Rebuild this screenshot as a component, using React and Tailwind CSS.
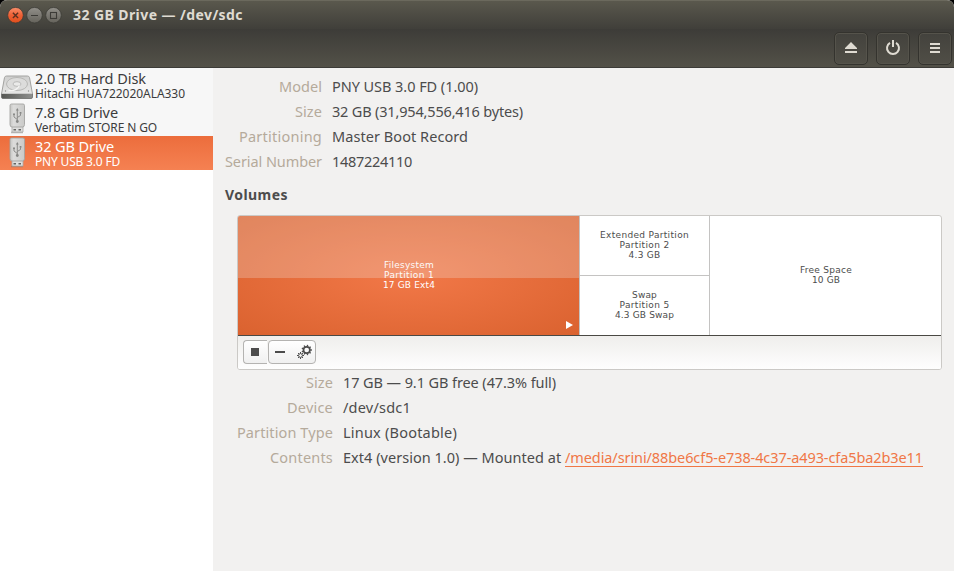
import { useLayoutEffect, useRef, useState } from "react";

// Spreads the letters so that a label takes exactly `w` pixels.
function Fit({ w, children, className = "" }) {
  const ref = useRef(null);
  const [spacing, setSpacing] = useState(0);
  useLayoutEffect(() => {
    const natural = ref.current.getBoundingClientRect().width;
    setSpacing((w - natural) / children.length);
  }, []);
  return (
    <span ref={ref} className={`inline-block whitespace-pre ${className}`} style={{ letterSpacing: `${spacing}px` }}>
      {children}
    </span>
  );
}

function WindowButton({ kind }) {
  const close = kind === "close";
  return (
    <svg width="17" height="17" viewBox="0 0 17 17">
      <defs>
        <linearGradient id={`wb-${kind}`} x1="0" y1="0" x2="0" y2="1">
          <stop offset="0" stopColor={close ? "#f8906c" : "#92908a"} />
          <stop offset="0.5" stopColor={close ? "#ee6035" : "#7b7973"} />
          <stop offset="1" stopColor={close ? "#e04f1c" : "#65635b"} />
        </linearGradient>
      </defs>
      <circle cx="8.500" cy="8.200" r="7.800" fill={`url(#wb-${kind})`} stroke="#3a3934" strokeWidth="0.700" />
      {close && <path d="M5.900 5.700l5.200 5.200M11.100 5.700l-5.200 5.200" stroke="#5a3020" strokeWidth="1.400" />}
      {kind === "min" && <path d="M5 8.500h7" stroke="#3c3b37" strokeWidth="1.200" />}
      {kind === "max" && <rect x="5.500" y="5.500" width="6" height="6" fill="none" stroke="#3c3b37" strokeWidth="1.100" />}
    </svg>
  );
}

function HeaderButton({ children }) {
  return (
    <div className="flex h-[33px] w-[34px] items-center justify-center rounded-[5px] border border-[#34332e] bg-linear-to-b from-[#43423d] to-[#504e46] shadow-[inset_0_0_0_1px_#55534b]">
      {children}
    </div>
  );
}

function DiskIcon() {
  return (
    <svg width="34" height="34" viewBox="0 0 34 34">
      <defs>
        <linearGradient id="disk-top" x1="0" y1="0" x2="0" y2="1">
          <stop offset="0" stopColor="#cfcfce" />
          <stop offset="1" stopColor="#e6e6e5" />
        </linearGradient>
        <linearGradient id="disk-front" x1="0" y1="0" x2="1" y2="0">
          <stop offset="0" stopColor="#555653" />
          <stop offset="1" stopColor="#8f908e" />
        </linearGradient>
      </defs>
      <path d="M6.500 8h21q1.500 0 2 1.500l3 16.500h-31l3-16.500q0.500-1.500 2-1.500z" fill="url(#disk-top)" stroke="#a2a2a0" />
      <path d="M1.500 25.500h31v3.500q0 1.500-1.500 1.500h-28q-1.500 0-1.500-1.500z" fill="url(#disk-front)" stroke="#6b6c6a" strokeWidth="0.800" />
      <path d="M1.500 25.500h31" stroke="#c9c9c8" />
      <ellipse cx="17" cy="16" rx="10.500" ry="6.500" fill="#dcdcdb" stroke="#b2b2b0" strokeWidth="0.900" />
      <ellipse cx="17" cy="16" rx="4" ry="2.300" fill="#ebebea" stroke="#b0b0ae" strokeWidth="0.800" />
      <path d="M8.500 22.500q8 1 11-5" fill="none" stroke="#f4f4f3" strokeWidth="1.300" />
      <circle cx="5.500" cy="23" r="0.700" fill="#8d8d8b" />
      <circle cx="28.500" cy="23" r="0.700" fill="#8d8d8b" />
    </svg>
  );
}

function UsbIcon({ id }) {
  return (
    <svg width="34" height="34" viewBox="0 0 34 34">
      <defs>
        <linearGradient id={id} x1="0" y1="0" x2="1" y2="0">
          <stop offset="0" stopColor="#c6c6c4" />
          <stop offset="0.250" stopColor="#dcdcdb" />
          <stop offset="1" stopColor="#cacac8" />
        </linearGradient>
      </defs>
      <path d="M11 30.500h12" stroke="#777876" strokeOpacity="0.500" strokeWidth="1.500" />
      <path d="M12 24.500h11v5.500h-11z" fill="#dededd" stroke="#a9a9a7" strokeWidth="0.800" />
      <path d="M13.500 27h2.500v1.500h-2.500zM18.500 27h2.500v1.500h-2.500z" fill="#636462" />
      <path d="M10 3.500q0-1.500 1.500-1.500h11.500q1.500 0 1.500 1.500v19q0 2.500-2 2.500h-10.500q-2 0-2-2.500z" fill={`url(#${id})`} stroke="#a4a4a2" strokeWidth="0.900" />
      <path d="M17.300 8v11M17.300 17.500l-3.300-2.500v-2.500M17.300 15.500l3.200-2v-2" fill="none" stroke="#848583" strokeWidth="0.900" />
      <path d="M17.300 6l-1.400 2.600h2.800z" fill="#848583" />
      <circle cx="17.300" cy="19.500" r="1.400" fill="#848583" />
      <circle cx="14" cy="12.300" r="1" fill="#848583" />
      <path d="M19.700 10h1.700v1.700h-1.700z" fill="#848583" />
    </svg>
  );
}

function DriveRow({ icon, title, titleW, sub, subW, selected }) {
  return (
    <div
      className={`flex h-[34px] ${
        selected ? "bg-linear-to-b from-[#ec6d3c] to-[#f58152] text-white" : "bg-[#f7f7f7] text-[#3c3c3c]"
      }`}
    >
      {icon}
      <div className="flex flex-col gap-px pt-[2px] pl-px">
        <Fit w={titleW} className="self-start text-[14.5px] leading-[16px]">{title}</Fit>
        <Fit w={subW} className="self-start text-[12px] leading-[13px]">{sub}</Fit>
      </div>
    </div>
  );
}

function Detail({ label, labelW, value, valueW, labelCol, children }) {
  return (
    <div className="flex h-[25px] items-center gap-[10px] text-[14.5px] leading-[25px]">
      <div className={`flex justify-end text-[#b5aa9b] ${labelCol}`}>
        <Fit w={labelW}>{label}</Fit>
      </div>
      <div className="flex">
        <Fit w={valueW}>{value}</Fit>
        {children}
      </div>
    </div>
  );
}

function VolumeText({ lines, className = "" }) {
  return (
    <div className={`flex flex-col items-center pb-[2px] font-['DejaVu_Sans'] text-[9px] leading-[10px] ${className}`}>
      {lines.map(([text, w]) => (
        <Fit key={text} w={w}>{text}</Fit>
      ))}
    </div>
  );
}

const gear = (cx, cy, r, teeth) =>
  Array.from({ length: teeth }, (_, i) => {
    const a = (i * 2 * Math.PI) / teeth;
    return `M${cx + r * Math.cos(a)} ${cy + r * Math.sin(a)}L${cx + (r + 1.6) * Math.cos(a)} ${cy + (r + 1.6) * Math.sin(a)}`;
  }).join("");

export default function App() {
  return (
    <div className="h-[571px] w-[954px] overflow-hidden bg-black font-['Noto_Sans',sans-serif] text-[#4c4c4c]">
      <div className="flex h-full flex-col overflow-hidden rounded-t-[7px] bg-[#f2f1f0]">
        <header className="flex h-[29px] shrink-0 items-center gap-[2px] border-t border-[#6b695d] bg-linear-to-b from-[#5a584d] to-[#403f3a] pl-[7px]">
          <WindowButton kind="close" />
          <WindowButton kind="min" />
          <WindowButton kind="max" />
          <div className="pb-px pl-[9px] text-[14px] leading-[20px] font-bold text-[#dfdbd2]">
            <Fit w={170}>32 GB Drive — /dev/sdc</Fit>
          </div>
        </header>

        <div className="flex h-[39px] shrink-0 justify-end gap-[8px] border-b border-[#3c3b37] bg-linear-to-b from-[#3d3c38] to-[#535148] pt-[3px] pr-[2px]">
          <HeaderButton>
            <svg width="14" height="15" viewBox="0 0 14 15" fill="#dfdbd2">
              <path d="M7 1L13 7v1H1V7zM1 10h12v2H1z" />
            </svg>
          </HeaderButton>
          <HeaderButton>
            <svg width="16" height="17" viewBox="0 0 16 17" fill="none" stroke="#dfdbd2" strokeWidth="2">
              <path d="M5 2.900a6 6 0 1 0 6 0M8 0v7" />
            </svg>
          </HeaderButton>
          <HeaderButton>
            <svg width="10" height="11" viewBox="0 0 10 11" fill="#dfdbd2">
              <path d="M0 0h10v2H0zM0 4h10v2H0zM0 8h10v2H0z" />
            </svg>
          </HeaderButton>
        </div>

        <div className="flex min-h-0 flex-1">
          <aside className="w-[213px] shrink-0 bg-white">
            <DriveRow icon={<DiskIcon />} title="2.0 TB Hard Disk" titleW={111} sub="Hitachi HUA722020ALA330" subW={150} />
            <DriveRow icon={<UsbIcon id="usb-a" />} title="7.8 GB Drive" titleW={83} sub="Verbatim STORE N GO" subW={122} />
            <DriveRow icon={<UsbIcon id="usb-b" />} title="32 GB Drive" titleW={79} sub="PNY USB 3.0 FD" subW={85} selected />
          </aside>

          <main className="flex flex-1 flex-col pt-[6px] pr-[12px] pl-[12px]">
            <Detail labelCol="w-[97px]" label="Model" labelW={43} value="PNY USB 3.0 FD (1.00)" valueW={146} />
            <Detail labelCol="w-[97px]" label="Size" labelW={27} value="32 GB (31,954,556,416 bytes)" valueW={191} />
            <Detail labelCol="w-[97px]" label="Partitioning" labelW={83} value="Master Boot Record" valueW={136} />
            <Detail labelCol="w-[97px]" label="Serial Number" labelW={97} value="1487224110" valueW={80} />
            <div className="mt-[8px] h-[25px] text-[14px] leading-[25px] font-bold">
              <Fit w={63}>Volumes</Fit>
            </div>

            <section className="mt-[8px] ml-[12px] h-[155px] overflow-hidden rounded-[3px] border border-[#cbc9c6] bg-white">
              <div className="flex h-[120px] border-b border-[#4a4944]">
                <div className="relative flex w-[341px] items-center justify-center bg-[radial-gradient(ellipse_at_center,#f27848_0%,#da622f_100%)] text-white">
                  <VolumeText className="pl-px" lines={[["Filesystem", 50], ["Partition 1", 50], ["17 GB Ext4", 52]]} />
                  <div className="absolute inset-x-0 top-0 h-[62px] bg-[#f4f0ec]/25" />
                  <svg className="absolute right-[6px] bottom-[6px]" width="7" height="8" viewBox="0 0 7 8" fill="#fff">
                    <path d="M0 0L7 4L0 8z" />
                  </svg>
                </div>
                <div className="flex w-[131px] flex-col border-x border-[#c4c3c2]">
                  <div className="flex h-[60px] items-center justify-center border-b border-[#c4c3c2]">
                    <VolumeText lines={[["Extended Partition", 89], ["Partition 2", 50], ["4.3 GB", 32]]} />
                  </div>
                  <div className="flex flex-1 items-center justify-center">
                    <VolumeText lines={[["Swap", 25], ["Partition 5", 50], ["4.3 GB Swap", 59]]} />
                  </div>
                </div>
                <div className="flex flex-1 items-center justify-center">
                  <VolumeText className="pl-px" lines={[["Free Space", 52], ["10 GB", 28]]} />
                </div>
              </div>
              <div className="flex h-[33px] bg-linear-to-b from-[#efeeec] to-[#fefefe] pt-[4px] pl-[5px]">
                <div className="flex h-[24px] w-[24px] items-center rounded-l-[4px] border border-r-0 border-[#b4b3b1] bg-linear-to-b from-white to-[#f0f0f0] pl-[7px]">
                  <div className="size-[8px] bg-[#4c4c4c]" />
                </div>
                <div className="ml-px flex h-[24px] w-[48px] items-center rounded-[4px] border border-[#b4b3b1] bg-linear-to-b from-white to-[#f0f0f0] pl-[6px]">
                  <div className="h-[2px] w-[10px] bg-[#4c4c4c]" />
                  <svg className="ml-[12px]" width="16" height="16" viewBox="0 0 16 16" fill="none" stroke="#4c4c4c">
                    <circle cx="9.700" cy="6" r="3.200" strokeWidth="1.700" />
                    <path d={gear(9.7, 6, 3.6, 9)} strokeWidth="1.300" />
                    <circle cx="3.500" cy="11.500" r="1.900" strokeWidth="0.900" />
                    <path d={gear(3.5, 11.5, 1.9, 8)} strokeWidth="1" />
                  </svg>
                </div>
              </div>
            </section>

            <div className="pl-[12px]">
              <Detail labelCol="w-[96px]" label="Size" labelW={27} value="17 GB — 9.1 GB free (47.3% full)" valueW={213} />
              <Detail labelCol="w-[96px]" label="Device" labelW={46} value="/dev/sdc1" valueW={68} />
              <Detail labelCol="w-[96px]" label="Partition Type" labelW={96} value="Linux (Bootable)" valueW={114} />
              <Detail labelCol="w-[96px]" label="Contents" labelW={63} value="Ext4 (version 1.0) — Mounted at " valueW={222}>
                <Fit w={358} className="h-[22px] border-b border-[#f07746] text-[#f07746]">
                  /media/srini/88be6cf5-e738-4c37-a493-cfa5ba2b3e11
                </Fit>
              </Detail>
            </div>
          </main>
        </div>
      </div>
    </div>
  );
}
